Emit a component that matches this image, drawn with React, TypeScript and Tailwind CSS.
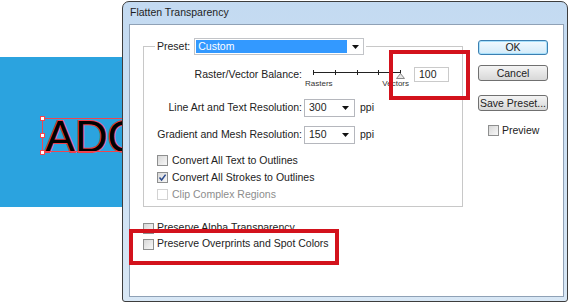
import React from 'react';

function Check({ checked = false, disabled = false }: { checked?: boolean; disabled?: boolean }) {
  return (
    <span
      className={
        disabled
          ? 'w-[11px] h-[11px] shrink-0 border border-[#d3d3d3] bg-white'
          : 'w-[11px] h-[11px] shrink-0 border border-[#8e8f8f] bg-gradient-to-br from-[#d8d8d8] to-[#f8f8f8] flex items-center justify-center'
      }
    >
      {checked && (
        <svg width="9" height="9" viewBox="0 0 9 9">
          <path d="M1.5 4.5 L3.6 7 L7.6 1.6" fill="none" stroke="#2b4a8c" strokeWidth="1.5" />
        </svg>
      )}
    </span>
  );
}

function Arrow() {
  return (
    <svg width="7" height="4" viewBox="0 0 7 4" className="shrink-0">
      <polygon points="0,0 7,0 3.5,4" fill="#111" />
    </svg>
  );
}

function Select({ value }: { value: string }) {
  return (
    <div className="ml-[2px] w-[51px] h-[18px] border border-[#b5b7bd] bg-white flex items-center justify-between pl-[4px] pr-[5px]">
      <span>{value}</span>
      <Arrow />
    </div>
  );
}

function Button({ label, primary = false }: { label: string; primary?: boolean }) {
  return (
    <div
      className={
        primary
          ? 'h-[15px] w-full rounded-[3px] border border-[#3c7fb1] bg-gradient-to-b from-[#f2f9fe] to-[#d3ebf9] shadow-[inset_0_0_0_1px_#a8e0fb] flex items-center justify-center leading-none'
          : 'h-[16px] w-full rounded-[3px] border border-[#707070] bg-gradient-to-b from-[#f4f4f4] to-[#d8d8d8] flex items-center justify-center leading-none'
      }
    >
      {label}
    </div>
  );
}

export default function App() {
  return (
    <div className="relative w-[570px] h-[304px] bg-white flex overflow-hidden font-['Liberation_Sans',Arial,sans-serif] text-[10.5px] text-[#222]">
      {/* artboard behind the dialog */}
      <div className="w-[122px] shrink-0 pt-[57px]">
        <div className="relative h-[150px] bg-[#2ba3df] overflow-hidden">
          <div className="pl-[45px] pt-[57px] text-[45px] leading-none text-black whitespace-nowrap [-webkit-text-stroke:2px_#ef3e4a] [paint-order:stroke_fill]">
            ADO
          </div>
          <div className="absolute left-[42px] top-[61px] h-[34px] w-[120px] border border-[#ef4650]" />
          <span className="absolute left-[40px] top-[59px] w-[5px] h-[5px] bg-white border border-[#ef4650]" />
          <span className="absolute left-[40px] top-[76px] w-[5px] h-[5px] bg-white border border-[#ef4650]" />
          <span className="absolute left-[40px] top-[93px] w-[5px] h-[5px] bg-white border border-[#ef4650]" />
        </div>
      </div>

      {/* dialog */}
      <div className="mt-[1px] w-[446px] h-[301px] shrink-0 flex flex-col border border-[#3d3d3d] rounded-t-[7px] rounded-b-[3px] bg-gradient-to-b from-[#c3daf1] to-[#d8e7f5] pl-[6px] pr-[3px] pb-[4px]">
        <div className="h-[22px] flex items-center pl-[1px] text-[#1e1e1e]">Flatten Transparency</div>
        <div className="flex-1 bg-white border border-[#8fa1b6] flex">
          {/* left column */}
          <div className="w-[333px] pl-[13px] pt-[13px]">
            <fieldset className="w-[320px] border border-[#c8c8c8] pb-[3px]">
              <legend className="ml-[11px] px-[2px] flex items-center gap-[4px]">
                <span>Preset:</span>
                <div className="w-[170px] h-[17px] border border-[#c2c4c8] bg-white flex items-center p-[1px] pr-[4px]">
                  <div className="flex-1 h-full bg-[#3399ff] text-white pl-[2px] leading-[13px]">Custom</div>
                  <div className="ml-[5px]">
                    <Arrow />
                  </div>
                </div>
              </legend>

              <div className="mt-[11px] flex items-start">
                <div className="w-[158px] h-[16px] leading-[16px] text-right">Raster/Vector Balance:</div>
                <div className="ml-[3px] w-[104px]">
                  <svg width="104" height="13" viewBox="0 0 104 13" className="block">
                    <line x1="8" y1="6.5" x2="95" y2="6.5" stroke="#222" strokeWidth="1" />
                    {[8, 30, 52, 73, 95].map((x) => (
                      <line key={x} x1={x + 0.5} y1="4" x2={x + 0.5} y2="9" stroke="#222" strokeWidth="1" />
                    ))}
                    <polygon points="91.5,12.5 95.5,7.5 99.5,12.5" fill="#e6e6e6" stroke="#8a8a8a" strokeWidth="1" />
                  </svg>
                  <div className="mt-[1px] flex justify-between text-[8px] leading-[8px] text-[#333]">
                    <span>Rasters</span>
                    <span>Vectors</span>
                  </div>
                </div>
                <div className="ml-[5px] mt-[1px] w-[35px] h-[15px] border border-[#cacaca] pl-[4px] leading-[13px]">100</div>
              </div>

              <div className="mt-[11px] flex items-center h-[18px]">
                <div className="w-[158px] text-right">Line Art and Text Resolution:</div>
                <Select value="300" />
                <span className="ml-[5px]">ppi</span>
              </div>

              <div className="mt-[9px] flex items-center h-[18px]">
                <div className="w-[158px] text-right">Gradient and Mesh Resolution:</div>
                <Select value="150" />
                <span className="ml-[5px]">ppi</span>
              </div>

              <div className="mt-[8px] pl-[13px]">
                <div className="h-[17px] flex items-center gap-[4px]">
                  <Check />
                  <span>Convert All Text to Outlines</span>
                </div>
                <div className="h-[17px] flex items-center gap-[4px]">
                  <Check checked />
                  <span>Convert All Strokes to Outlines</span>
                </div>
                <div className="h-[17px] flex items-center gap-[4px] text-[#8d8d8d]">
                  <Check disabled />
                  <span>Clip Complex Regions</span>
                </div>
              </div>
            </fieldset>

            <div className="mt-[13px]">
              <div className="h-[16px] flex items-center gap-[3px]">
                <Check />
                <span>Preserve Alpha Transparency</span>
              </div>
              <div className="h-[16px] flex items-center gap-[3px]">
                <Check />
                <span>Preserve Overprints and Spot Colors</span>
              </div>
            </div>
          </div>

          {/* right column */}
          <div className="ml-[15px] w-[70px] pt-[15px] flex flex-col">
            <Button label="OK" primary />
            <div className="mt-[10px]">
              <Button label="Cancel" />
            </div>
            <div className="mt-[14px]">
              <Button label="Save Preset..." />
            </div>
            <div className="mt-[13px] pl-[10px] h-[13px] flex items-center gap-[3px]">
              <Check />
              <span>Preview</span>
            </div>
          </div>
        </div>
      </div>

      {/* red annotation boxes */}
      <div className="absolute left-[389px] top-[50px] w-[81px] h-[50px] border-4 border-[#d3121c]" />
      <div className="absolute left-[129px] top-[229px] w-[210px] h-[36px] border-4 border-[#d3121c]" />
    </div>
  );
}
